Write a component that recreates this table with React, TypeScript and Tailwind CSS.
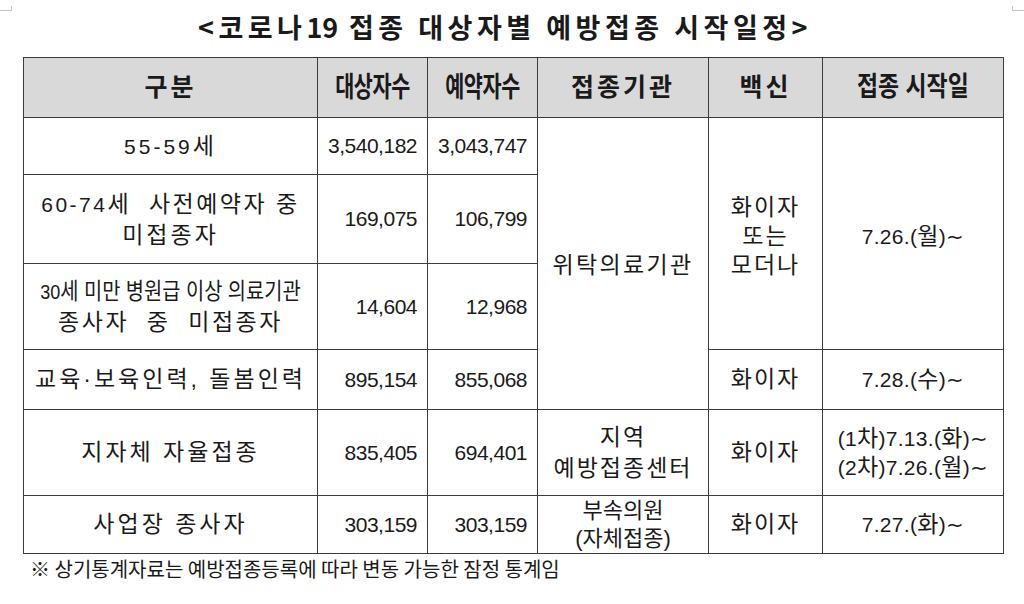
import React from "react";

const cell = "bg-white flex items-center justify-center text-center";
const num = "bg-white flex items-center justify-end pr-[10px] text-[21px] tracking-[-0.5px]";
const hdr = "bg-[#d9d9d9] flex items-center justify-center text-center font-bold";

export default function App() {
  return (
    <div className="relative w-[1024px] h-[604px] bg-white text-[#1a1a1a] font-['Liberation_Sans','Noto_Sans_CJK_KR',sans-serif] overflow-hidden">
      {/* corner marks */}
      <div className="absolute left-0 top-[10px] w-[11px] h-px bg-[#c4c4c4]" />
      <div className="absolute left-[11px] top-[6px] w-px h-[5px] bg-[#c4c4c4]" />
      <div className="absolute right-0 top-[10px] w-[11px] h-px bg-[#c4c4c4]" />
      <div className="absolute right-[11px] top-[6px] w-px h-[5px] bg-[#c4c4c4]" />

      <div className="h-[57px] flex items-center justify-center pr-[14px] pb-[4px]">
        <h1 className="text-[27px] font-bold tracking-[4.5px] leading-none font-['Noto_Sans_CJK_KR',sans-serif]">
          &lt;코로나<span className="tracking-[0px]">19</span> 접종 대상자별 예방접종 시작일정&gt;
        </h1>
      </div>

      <div className="ml-[23px] w-[981px] grid grid-cols-[293px_109px_109px_170px_113px_180px] grid-rows-[59px_56px_88px_85px_59px_85px_57px] gap-px p-px bg-[#3c3c3c]">
        {/* header */}
        <div className={hdr}>
          <span className="text-[25px] tracking-[3px]">구분</span>
        </div>
        <div className={hdr}>
          <span className="inline-block text-[28px] scale-x-[0.74] tracking-[-0.5px] whitespace-nowrap">대상자수</span>
        </div>
        <div className={hdr}>
          <span className="inline-block text-[28px] scale-x-[0.74] tracking-[-0.5px] whitespace-nowrap">예약자수</span>
        </div>
        <div className={hdr}>
          <span className="text-[25px] tracking-[3px]">접종기관</span>
        </div>
        <div className={hdr}>
          <span className="text-[25px] tracking-[3px]">백신</span>
        </div>
        <div className={hdr}>
          <span className="inline-block text-[27px] scale-x-[0.85] whitespace-nowrap">접종 시작일</span>
        </div>

        {/* row 1 */}
        <div className={cell}>
          <span className="text-[23px] tracking-[3px]">
            <span className="text-[21px]">55-59</span>세
          </span>
        </div>
        <div className={num}>3,540,182</div>
        <div className={num}>3,043,747</div>
        <div className={`${cell} row-span-4`}>
          <span className="text-[23px] tracking-[2.3px] pt-[4px]">위탁의료기관</span>
        </div>
        <div className={`${cell} row-span-3`}>
          <div className="text-[23px] tracking-[2px] leading-[29px] pt-[6px]">
            <div>화이자</div>
            <div>또는</div>
            <div>모더나</div>
          </div>
        </div>
        <div className={`${cell} row-span-3`}>
          <span className="text-[21px] pt-[6px] tracking-[0.3px]">
            7.26.(<span className="text-[23px]">월</span>)∼
          </span>
        </div>

        {/* row 2 */}
        <div className={cell}>
          <div className="text-[23px] tracking-[2.5px] leading-[30px] whitespace-pre">
            <div>
              <span className="text-[21px]">60-74</span>세  사전예약자 중
            </div>
            <div className="tracking-[3px]">미접종자</div>
          </div>
        </div>
        <div className={num}>169,075</div>
        <div className={num}>106,799</div>

        {/* row 3 */}
        <div className={cell}>
          <div className="text-[23px] leading-[30px]">
            <div className="inline-block scale-x-[0.86] whitespace-nowrap">
              <span className="text-[21px]">30</span>세 미만 병원급 이상 의료기관
            </div>
            <div className="tracking-[2.5px] whitespace-pre">종사자  중  미접종자</div>
          </div>
        </div>
        <div className={num}>14,604</div>
        <div className={num}>12,968</div>

        {/* row 4 */}
        <div className={cell}>
          <span className="text-[23px] tracking-[3px]">교육·보육인력, 돌봄인력</span>
        </div>
        <div className={num}>895,154</div>
        <div className={num}>855,068</div>
        <div className={cell}>
          <span className="text-[23px] tracking-[2px]">화이자</span>
        </div>
        <div className={cell}>
          <span className="text-[21px] tracking-[0.3px]">
            7.28.(<span className="text-[23px]">수</span>)∼
          </span>
        </div>

        {/* row 5 */}
        <div className={cell}>
          <span className="text-[23px] tracking-[3px]">지자체 자율접종</span>
        </div>
        <div className={num}>835,405</div>
        <div className={num}>694,401</div>
        <div className={cell}>
          <div className="text-[23px] tracking-[2px] leading-[31px]">
            <div>지역</div>
            <div>예방접종센터</div>
          </div>
        </div>
        <div className={cell}>
          <span className="text-[23px] tracking-[2px]">화이자</span>
        </div>
        <div className={cell}>
          <div className="text-[21px] leading-[29px] tracking-[0.3px]">
            <div>
              (1<span className="text-[23px]">차</span>)7.13.(<span className="text-[23px]">화</span>)∼
            </div>
            <div>
              (2<span className="text-[23px]">차</span>)7.26.(<span className="text-[23px]">월</span>)∼
            </div>
          </div>
        </div>

        {/* row 6 */}
        <div className={cell}>
          <span className="text-[23px] tracking-[3px]">사업장 종사자</span>
        </div>
        <div className={num}>303,159</div>
        <div className={num}>303,159</div>
        <div className={cell}>
          <div className="text-[22px] leading-[28px]">
            <div>부속의원</div>
            <div>(자체접종)</div>
          </div>
        </div>
        <div className={cell}>
          <span className="text-[23px] tracking-[2px]">화이자</span>
        </div>
        <div className={cell}>
          <span className="text-[21px] tracking-[0.3px]">
            7.27.(<span className="text-[23px]">화</span>)∼
          </span>
        </div>
      </div>

      <div className="ml-[30px] mt-[3px] text-[20px] leading-[24px] font-['Noto_Sans_CJK_KR',sans-serif]">
        ※ 상기통계자료는 예방접종등록에 따라 변동 가능한 잠정 통계임
      </div>
    </div>
  );
}
